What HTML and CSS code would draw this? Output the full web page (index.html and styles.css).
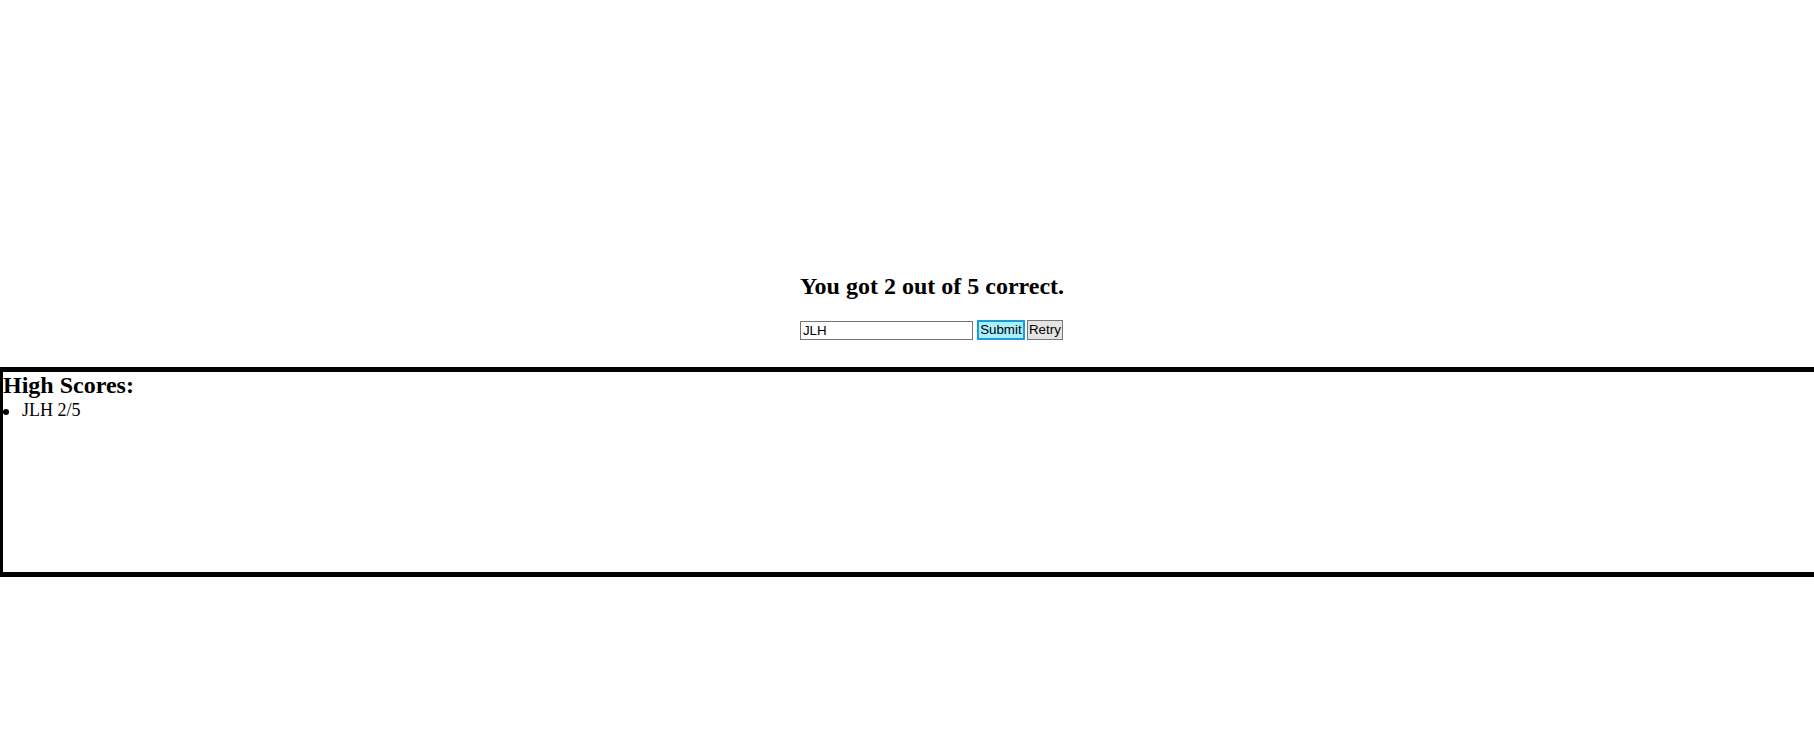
FILE: index.html
```html
<!DOCTYPE html>
<html>
<head>
<meta charset="utf-8">
<link rel="stylesheet" href="styles.css">
</head>
<body>
<div class="stage">
  <div class="result">
    <h2 class="result-title">You got 2 out of 5 correct.</h2>
    <div class="controls">
      <input class="name-input" type="text" value="JLH"><button class="btn btn-submit">Submit</button><button class="btn btn-retry">Retry</button>
    </div>
  </div>
</div>
<div class="scores">
  <h2 class="scores-title">High Scores:</h2>
  <ul class="scores-list">
    <li class="scores-item">JLH 2/5</li>
  </ul>
</div>
</body>
</html>
```

FILE: styles.css
```css
html, body {
  margin: 0;
  padding: 0;
  overflow: hidden;
  background: #fff;
  font-family: "Liberation Serif", "Times New Roman", serif;
  color: #000;
}

.stage {
  padding-top: 273px;
  padding-left: 50px;
}

.result {
  width: max-content;
  margin: 0 auto;
}

.result-title {
  margin: 0 0 20px 0;
  font-size: 24px;
  font-weight: bold;
  line-height: 27px;
}

.controls {
  display: flex;
  align-items: flex-start;
  gap: 3px;
  height: 20px;
}

.name-input {
  box-sizing: border-box;
  width: 173px;
  height: 19px;
  margin: 1px 0 0 0;
  padding: 0 2px;
  border: 1px solid #767676;
  font-family: "Liberation Sans", Arial, sans-serif;
  font-size: 13.333px;
  color: #000;
  background: #fff;
  outline: none;
}

.btn {
  box-sizing: border-box;
  height: 20px;
  margin: 0;
  padding: 0 1px;
  font-family: "Liberation Sans", Arial, sans-serif;
  font-size: 13.333px;
  color: #000;
  line-height: 16px;
}

.btn-submit {
  width: 48px;
  margin-left: 1px;
  border: 2px solid #1b9bd8;
  background: #a8f0ff;
}

.btn-retry {
  width: 36px;
  margin-left: -1px;
  border: 1px solid #767676;
  background: #e4e4e4;
}

.scores {
  box-sizing: border-box;
  margin-top: 27px;
  margin-left: -2px;
  width: calc(100vw + 20px);
  height: 210px;
  border: 5px solid #000;
}

.scores-title {
  margin: 0;
  font-size: 24px;
  font-weight: bold;
  line-height: 27px;
}

.scores-list {
  margin: 0;
  padding: 1px 0 0 0;
  list-style: none;
  font-size: 18px;
  line-height: 20px;
}

.scores-item::before {
  content: "";
  display: inline-block;
  width: 6px;
  height: 6px;
  border-radius: 50%;
  background: #000;
  margin: 0 13px 0 0;
  vertical-align: middle;
}
```
